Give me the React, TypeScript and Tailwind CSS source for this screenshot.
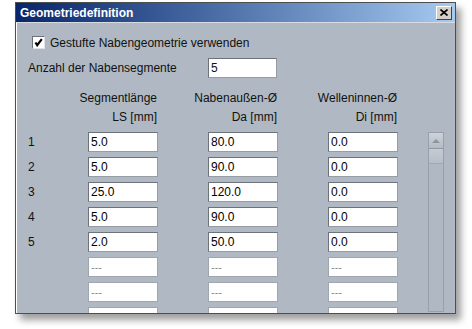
import React from "react";

const rows: { n: string; ls: string; da: string; di: string; empty?: boolean }[] = [
  { n: "1", ls: "5.0", da: "80.0", di: "0.0" },
  { n: "2", ls: "5.0", da: "90.0", di: "0.0" },
  { n: "3", ls: "25.0", da: "120.0", di: "0.0" },
  { n: "4", ls: "5.0", da: "90.0", di: "0.0" },
  { n: "5", ls: "2.0", da: "50.0", di: "0.0" },
  { n: "", ls: "", da: "", di: "" },
  { n: "", ls: "", da: "", di: "" },
  { n: "", ls: "", da: "", di: "", empty: true },
];

function Field({ value, blank }: { value: string; blank?: boolean }) {
  if (value) {
    return (
      <div className="w-[70px] h-[20px] bg-white border border-t-[#6c737b] border-l-[#6c737b] border-b-[#959ca4] border-r-[#959ca4] flex items-center pl-[2px] text-[12px] text-black">
        {value}
      </div>
    );
  }
  return (
    <div className="w-[70px] h-[20px] bg-white border border-[#9ea6ae] flex items-center pl-[2px] text-[11px] text-[#8a8a8a]">
      {blank ? "" : "---"}
    </div>
  );
}

export default function App() {
  return (
    <div
      className="w-[472px] h-[329px] bg-white overflow-hidden pt-[2px]"
      style={{ fontFamily: '"Liberation Sans", Arial, sans-serif' }}
    >
      <div className="ml-[15px] w-[441px] h-[312px] border border-[#4e4e4e] flex flex-col overflow-hidden shadow-[5px_6px_7px_rgba(0,0,0,0.38)]">
        {/* Title bar */}
        <div className="h-[19px] shrink-0 flex items-center justify-between pl-[4px] pr-[3px] bg-gradient-to-r from-[#0a246a] to-[#a6caf0]">
          <span className="text-white font-bold text-[12px] leading-none">Geometriedefinition</span>
          <div className="w-[16px] h-[14px] bg-[#d4d0c8] border border-t-white border-l-white border-b-[#404040] border-r-[#404040] flex items-center justify-center">
            <svg width="8" height="7" viewBox="0 0 8 7">
              <path d="M0.5 0.5 L7.5 6.5 M7.5 0.5 L0.5 6.5" stroke="#000" strokeWidth="1.6" />
            </svg>
          </div>
        </div>
        {/* Content */}
        <div className="flex-1 bg-[#b0b9c3] border-l border-l-white border-t border-t-[#d6dce2] pl-[11px] pt-[13px] text-[12px] text-[#111]">
          {/* Checkbox row */}
          <div className="h-[13px] flex items-center ml-[4px] gap-[5px]">
            <div className="w-[13px] h-[13px] bg-white border border-t-[#6c737b] border-l-[#6c737b] border-b-[#dfe3e7] border-r-[#dfe3e7] flex items-center justify-center">
              <svg width="9" height="9" viewBox="0 0 9 9">
                <path d="M1.5 4.5 L3.2 7.2 L7.8 1.2" stroke="#000" strokeWidth="2.2" fill="none" />
              </svg>
            </div>
            <span>Gestufte Nabengeometrie verwenden</span>
          </div>
          {/* Anzahl row */}
          <div className="mt-[9px] h-[20px] flex items-center">
            <span className="w-[180px]">Anzahl der Nabensegmente</span>
            <div className="w-[69px] h-[20px] bg-white border border-t-[#6c737b] border-l-[#6c737b] border-b-[#959ca4] border-r-[#959ca4] flex items-center pl-[2px]">
              5
            </div>
          </div>
          {/* Header */}
          <div className="mt-[13px] flex flex-col gap-[5px]">
            <div className="h-[14px] flex items-center">
              <span className="w-[129px] text-right whitespace-nowrap">Segmentlänge</span>
              <span className="w-[120px] text-right whitespace-nowrap">Nabenaußen-Ø</span>
              <span className="w-[120px] text-right whitespace-nowrap">Welleninnen-Ø</span>
            </div>
            <div className="h-[14px] flex items-center">
              <span className="w-[129px] text-right">LS [mm]</span>
              <span className="w-[120px] text-right">Da [mm]</span>
              <span className="w-[120px] text-right">Di [mm]</span>
            </div>
          </div>
          {/* Table + scrollbar */}
          <div className="mt-[8px] flex items-start">
            <div className="flex flex-col gap-[5px]">
              {rows.map((r, i) => (
                <div key={i} className="h-[20px] flex items-center">
                  <span className="w-[60px]">{r.n}</span>
                  <Field value={r.ls} blank={r.empty} />
                  <span className="w-[50px]" />
                  <Field value={r.da} blank={r.empty} />
                  <span className="w-[50px]" />
                  <Field value={r.di} blank={r.empty} />
                </div>
              ))}
            </div>
            <div className="ml-[30px] w-[16px] h-[180px] border border-[#98a1ab] flex flex-col">
              <div className="h-[16px] border-b border-b-[#8f98a2] bg-gradient-to-b from-[#cdd3d9] to-[#b3bcc5] flex items-center justify-center">
                <svg width="8" height="4" viewBox="0 0 8 4">
                  <path d="M0 4 L4 0 L8 4 Z" fill="#8c96a0" />
                </svg>
              </div>
              <div className="h-[15px] bg-gradient-to-b from-[#c4cbd2] to-[#b6bec7] border-b border-b-[#a0a8b1]" />
              <div className="flex-1 bg-[#b0b9c3]" />
            </div>
          </div>
        </div>
      </div>
    </div>
  );
}
